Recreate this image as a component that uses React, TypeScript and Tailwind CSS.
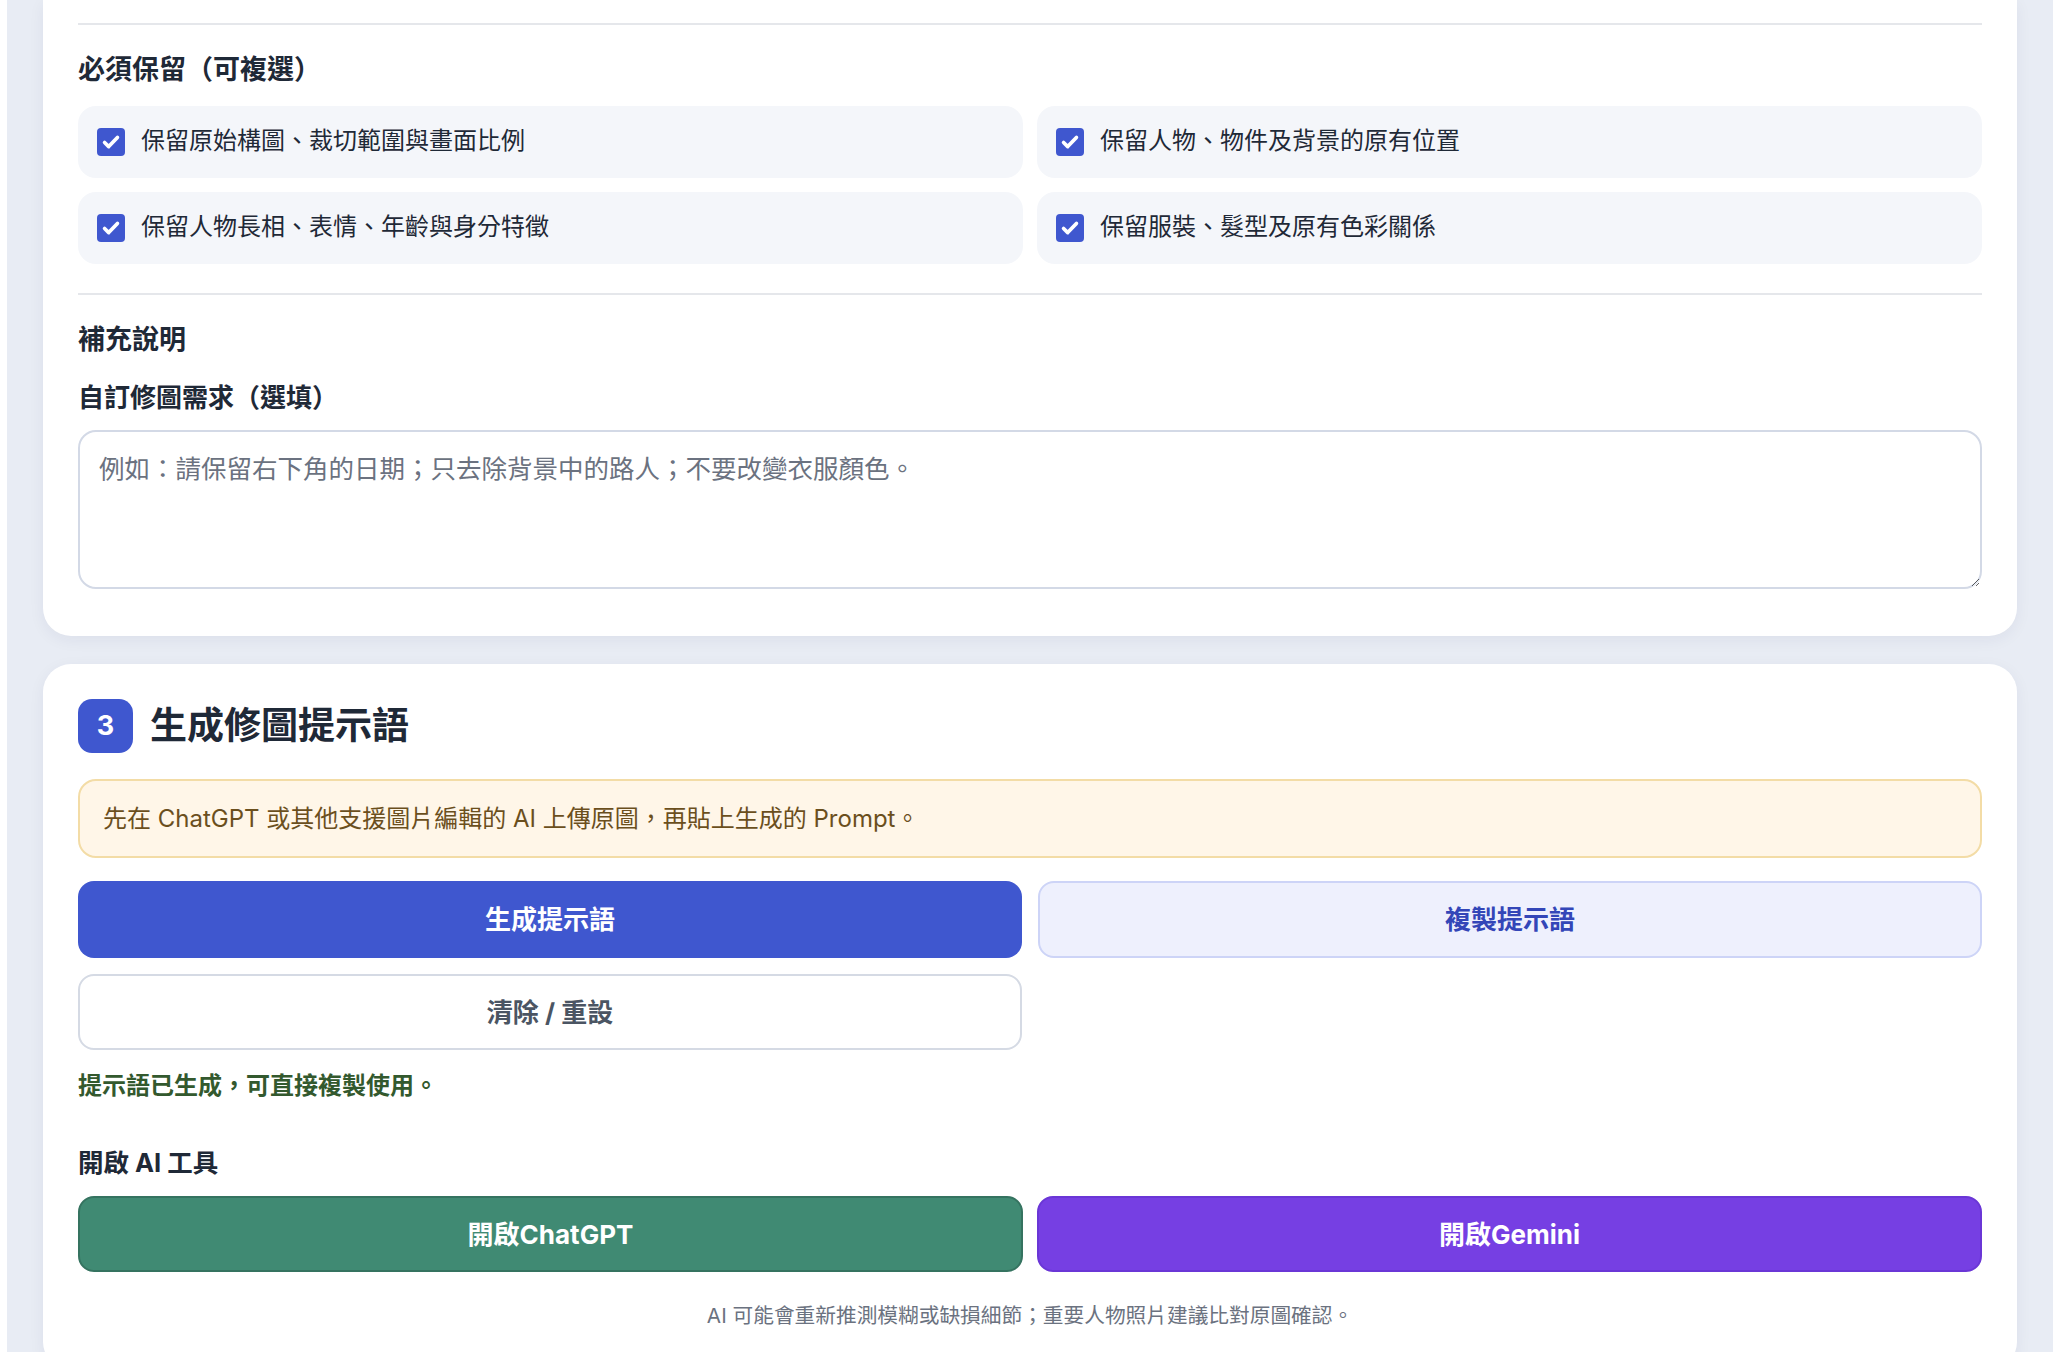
const font = { fontFamily: 'Inter, "Noto Sans CJK TC", sans-serif' };

const keepOptions = [
  '保留原始構圖、裁切範圍與畫面比例',
  '保留人物、物件及背景的原有位置',
  '保留人物長相、表情、年齡與身分特徵',
  '保留服裝、髮型及原有色彩關係',
];

function CheckBox() {
  return (
    <span className="flex h-[28px] w-[28px] shrink-0 items-center justify-center rounded-[4px] bg-[#3f57cf]">
      <svg viewBox="0 0 24 24" className="h-[22px] w-[22px]" fill="none" stroke="white" strokeWidth="4" strokeLinecap="round" strokeLinejoin="round">
        <path d="M5 12.5l4.5 4.5L19 7" />
      </svg>
    </span>
  );
}

export default function App() {
  return (
    <div className="min-h-screen bg-white pl-[7px] pr-[9px]" style={font}>
      <div className="bg-[#e8ecf4] px-[36px] pb-[40px]">
        {/* options card (top is scrolled off) */}
        <div className="rounded-b-[28px] bg-white px-[35px] pb-[47px] pt-[23px] shadow-[0_4px_16px_rgba(30,41,80,0.06)]">
          <div className="h-[2px] bg-[#e5e7eb]" />
          <h3 className="mt-[27px] text-[27px] font-bold leading-[36px] text-[#1f2937]">必須保留（可複選）</h3>
          <div className="mt-[18px] grid grid-cols-2 gap-[14px]">
            {keepOptions.map((t) => (
              <label key={t} className="flex h-[72px] items-center gap-[16px] rounded-[18px] bg-[#f4f6fa] px-[19px]">
                <CheckBox />
                <span className="pb-[2px] text-[24px] leading-[34px] text-[#1f2937]">{t}</span>
              </label>
            ))}
          </div>
          <div className="mt-[29px] h-[2px] bg-[#e5e7eb]" />
          <h3 className="mt-[27px] text-[27px] font-bold leading-[36px] text-[#1f2937]">補充說明</h3>
          <div className="mt-[23px] text-[26px] font-bold leading-[34px] text-[#1f2937]">自訂修圖需求（選填）</div>
          <textarea
            className="mt-[15px] block h-[159px] w-full rounded-[18px] border-2 border-[#d3d9e6] px-[19px] pb-[16px] pt-[19px] text-[25.5px] leading-[36px] text-[#1f2937] placeholder:text-[#6b7280] outline-none"
            placeholder="例如：請保留右下角的日期；只去除背景中的路人；不要改變衣服顏色。"
          />
        </div>

        {/* step 3 card */}
        <div className="mt-[28px] rounded-[28px] bg-white px-[35px] pb-[40px] pt-[35px] shadow-[0_4px_16px_rgba(30,41,80,0.06)]">
          <div className="flex items-center gap-[17px]">
            <span className="flex h-[54px] w-[55px] items-center justify-center rounded-[14px] bg-[#3f57cf] text-[27px] font-bold text-white">3</span>
            <h2 className="text-[37px] font-bold leading-[48px] text-[#1f2937]">生成修圖提示語</h2>
          </div>

          <div className="mt-[26px] flex h-[79px] items-center rounded-[18px] border-2 border-[#f3dca6] bg-[#fff6e8] px-[23px] text-[24px] text-[#6b4f1d]">
            先在 ChatGPT 或其他支援圖片編輯的 AI 上傳原圖，再貼上生成的 Prompt。
          </div>

          <div className="mt-[23px] grid grid-cols-2 gap-x-[16px] gap-y-[16px]">
            <button className="h-[77px] rounded-[16px] bg-[#3f57cf] text-[26px] font-bold text-white">生成提示語</button>
            <button className="h-[77px] rounded-[16px] border-2 border-[#cdd4f7] bg-[#eef0fd] text-[26px] font-bold text-[#3346b8]">複製提示語</button>
            <button className="h-[76px] rounded-[16px] border-2 border-[#d5dae4] bg-white text-[26px] font-bold text-[#4b5563]">清除 / 重設</button>
          </div>

          <p className="mt-[19px] text-[24px] font-bold leading-[34px] text-[#33592e]">提示語已生成，可直接複製使用。</p>

          <div className="mt-[43px] text-[25.5px] font-bold leading-[34px] text-[#1f2937]">開啟 AI 工具</div>
          <div className="mt-[16px] grid grid-cols-2 gap-[14px]">
            <button className="h-[76px] rounded-[16px] border-2 border-[#357360] bg-[#408a73] text-[26px] font-bold text-white">開啟ChatGPT</button>
            <button className="h-[76px] rounded-[16px] border-2 border-[#6a36d6] bg-[#763fe3] text-[26px] font-bold text-white">開啟Gemini</button>
          </div>

          <p className="mt-[30px] text-center text-[20.7px] leading-[28px] text-[#6b7280]">
            AI 可能會重新推測模糊或缺損細節；重要人物照片建議比對原圖確認。
          </p>
        </div>
      </div>
    </div>
  );
}
